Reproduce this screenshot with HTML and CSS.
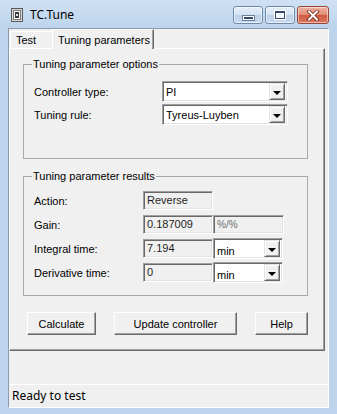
FILE: index.html
```html
<!doctype html>
<html lang="en">
    <head>
        <meta charset="UTF-8" />
        <title>TC.Tune</title>
        <link rel="stylesheet" href="styles.css">
    </head>
    <body>
        <div class="window">
            <div class="titlebar">
                <svg class="app-icon" width="12" height="14" viewBox="0 0 12 14">
                    <rect x="0.5" y="0.5" width="11" height="13" fill="#d8d8d8" stroke="#5a5a5a" />
                    <rect x="2.5" y="2.5" width="7" height="9" fill="#f4f4f4" stroke="#7a7a7a" />
                    <rect x="4" y="4" width="4" height="6" fill="#3c3c3c" />
                    <rect x="5" y="6" width="2" height="2" fill="#e0e0e0" />
                </svg>
                <span class="title">TC.Tune</span>
                <div class="caption-buttons">
                    <div class="cap cap-min"><span class="glyph-min"></span></div>
                    <div class="cap cap-max"><span class="glyph-max"></span></div>
                    <div class="cap cap-close">
                        <svg width="14" height="11" viewBox="0 0 14 11">
                            <path d="M3 1.5 L11 9.5 M11 1.5 L3 9.5" stroke="#6b2417" stroke-width="3.6" stroke-linecap="square" />
                            <path d="M3 1.5 L11 9.5 M11 1.5 L3 9.5" stroke="#ffffff" stroke-width="2" stroke-linecap="square" />
                        </svg>
                    </div>
                </div>
            </div>

            <div class="client">
                <div class="tabs">
                    <div class="tab tab-test">Test</div>
                    <div class="tab tab-active">Tuning parameters</div>
                </div>

                <div class="tab-panel">
                    <fieldset class="group group-options">
                        <legend>Tuning parameter options</legend>
                        <div class="option-row">
                            <span class="label">Controller type:</span>
                            <div class="combo combo-wide">
                                <span class="combo-text">PI</span>
                                <span class="drop-btn"><span class="arrow"></span></span>
                            </div>
                        </div>
                        <div class="option-row">
                            <span class="label">Tuning rule:</span>
                            <div class="combo combo-wide">
                                <span class="combo-text">Tyreus-Luyben</span>
                                <span class="drop-btn"><span class="arrow"></span></span>
                            </div>
                        </div>
                    </fieldset>

                    <fieldset class="group group-results">
                        <legend>Tuning parameter results</legend>
                        <div class="result-row">
                            <span class="label">Action:</span>
                            <div class="field">Reverse</div>
                        </div>
                        <div class="result-row">
                            <span class="label">Gain:</span>
                            <div class="field">0.187009</div>
                            <div class="field field-unit">%/%</div>
                        </div>
                        <div class="result-row">
                            <span class="label">Integral time:</span>
                            <div class="field">7.194</div>
                            <div class="combo combo-unit">
                                <span class="combo-text">min</span>
                                <span class="drop-btn"><span class="arrow"></span></span>
                            </div>
                        </div>
                        <div class="result-row">
                            <span class="label">Derivative time:</span>
                            <div class="field">0</div>
                            <div class="combo combo-unit">
                                <span class="combo-text">min</span>
                                <span class="drop-btn"><span class="arrow"></span></span>
                            </div>
                        </div>
                    </fieldset>

                    <div class="button-row">
                        <button class="btn btn-calc">Calculate</button>
                        <button class="btn btn-update">Update controller</button>
                        <button class="btn btn-help">Help</button>
                    </div>
                </div>

                <div class="filler"></div>

                <div class="statusbar">Ready to test</div>
            </div>
        </div>
    </body>
</html>
```

FILE: styles.css
```css
* {
    box-sizing: border-box;
}
body {
    margin: 0;
    width: 337px;
    height: 414px;
    overflow: hidden;
    background: #bdd4ec;
    font-family: "Liberation Sans", Arial, sans-serif;
    font-size: 11px;
    color: #000;
}
.window {
    display: flex;
    flex-direction: column;
    height: 414px;
}

/* title bar */
.titlebar {
    height: 28px;
    display: flex;
    align-items: flex-start;
    padding-left: 11px;
    background: linear-gradient(#cfe0f3, #bdd4ec);
}
.app-icon {
    margin-top: 8px;
}
.title {
    margin-left: 7px;
    padding-top: 7px;
    font-family: "Noto Sans", sans-serif;
    font-size: 12px;
    line-height: 16px;
    color: #000;
}
.caption-buttons {
    margin-left: auto;
    margin-right: 8px;
    margin-top: 6px;
    display: flex;
    gap: 2px;
}
.cap {
    width: 30px;
    height: 18px;
    border: 1px solid #7189a8;
    border-radius: 3px;
    display: flex;
    align-items: center;
    justify-content: center;
    background: linear-gradient(#e6eff9, #d3e1f1 50%, #bccfe6 50%, #c9dbef);
    box-shadow: inset 0 0 0 1px rgba(255, 255, 255, 0.5);
}
.cap-close {
    width: 32px;
    border-color: #9a4636;
    background: linear-gradient(#eeb3a3, #e08a73 50%, #d0583d 50%, #da7a60);
}
.glyph-min {
    width: 11px;
    height: 4px;
    margin-top: 6px;
    background: #34496a;
    border: 1px solid #fff;
    outline: 1px solid #6a7f9c;
}
.glyph-max {
    width: 10px;
    height: 8px;
    background: #f4f8fc;
    border: 1px solid #34496a;
    border-top-width: 2px;
    outline: 1px solid #fff;
}

/* client area */
.client {
    flex: 1;
    margin: 0 8px 6px 8px;
    display: flex;
    flex-direction: column;
    background: #f0f0f0;
    border: 1px solid;
    border-color: #8d9aab #fff #fff #8d9aab;
}
.tabs {
    height: 19px;
    display: flex;
    align-items: flex-end;
    padding-left: 1px;
}
.tab {
    background: #f0f0f0;
    border: 1px solid;
    border-bottom: none;
    border-color: #fff #a0a0a0 transparent #fff;
    line-height: 13px;
    padding-left: 5px;
    white-space: nowrap;
}
.tab-test {
    width: 42px;
    height: 17px;
    padding-top: 2px;
    border-right: none;
}
.tab-active {
    position: relative;
    z-index: 1;
    width: 102px;
    height: 20px;
    margin-bottom: -1px;
    padding-top: 4px;
    border-right-color: #696969;
    box-shadow: inset -1px 0 0 #a0a0a0;
}
.tab-panel {
    width: 316px;
    height: 303px;
    padding: 9px 0 0 13px;
    border: 1px solid;
    border-color: #fff #696969 #696969 #fff;
    box-shadow: inset -1px -1px 0 #a0a0a0;
}

/* group boxes */
.group {
    width: 285px;
    margin: 0;
    border: 1px solid #a9a9a9;
    padding: 10px 8px 33px 8px;
}
.group legend {
    padding: 0 1px;
    line-height: 13px;
}
.group-results {
    margin-top: 11px;
    padding-top: 7px;
    padding-bottom: 12px;
}
.label {
    padding-left: 2px;
}
.option-row {
    display: grid;
    grid-template-columns: 130px 126px;
    align-items: center;
    height: 21px;
}
.option-row + .option-row {
    margin-top: 2px;
}
.result-row {
    display: grid;
    grid-template-columns: 111px 70px 71px;
    align-items: center;
    height: 21px;
}
.result-row + .result-row {
    margin-top: 3px;
}

/* sunken controls */
.combo,
.field {
    height: 21px;
    border: 1px solid;
    border-color: #a0a0a0 #fff #fff #a0a0a0;
    box-shadow: inset 1px 1px 0 #696969, inset -1px -1px 0 #e3e3e3;
}
.combo {
    display: flex;
    align-items: center;
    background: #fff;
    padding: 2px 2px 2px 3px;
}
.combo-text {
    flex: 1;
    white-space: nowrap;
}
.combo-unit {
    width: 70px;
}
.combo-unit .combo-text {
    padding-top: 4px;
}
.drop-btn {
    width: 16px;
    height: 17px;
    display: flex;
    align-items: center;
    justify-content: center;
    background: #f0f0f0;
    border: 1px solid;
    border-color: #e3e3e3 #696969 #696969 #e3e3e3;
    box-shadow: inset 1px 1px 0 #fff, inset -1px -1px 0 #a0a0a0;
}
.arrow {
    width: 0;
    height: 0;
    margin-top: 2px;
    border-left: 4px solid transparent;
    border-right: 4px solid transparent;
    border-top: 4px solid #000;
}
.field {
    height: 19px;
    background: #f0f0f0;
    color: #1e1e1e;
    padding: 2px 0 0 3px;
    line-height: 13px;
}
.field-unit {
    color: #6d6d6d;
    font-size: 10px;
}

/* buttons */
.button-row {
    display: flex;
    gap: 18px;
    margin-top: 16px;
    padding-left: 4px;
}
.btn {
    height: 23px;
    padding: 0;
    font-family: "Liberation Sans", Arial, sans-serif;
    font-size: 11px;
    color: #000;
    background: #f0f0f0;
    border: 1px solid;
    border-color: #fff #696969 #696969 #fff;
    box-shadow: inset -1px -1px 0 #a0a0a0;
}
.btn-calc {
    width: 69px;
}
.btn-update {
    width: 123px;
}
.btn-help {
    width: 53px;
}

/* status bar */
.filler {
    flex: 1;
}
.statusbar {
    height: 23px;
    border-top: 1px solid #fff;
    padding-left: 3px;
    font-family: "Noto Sans", sans-serif;
    font-size: 12px;
    line-height: 22px;
}
```
